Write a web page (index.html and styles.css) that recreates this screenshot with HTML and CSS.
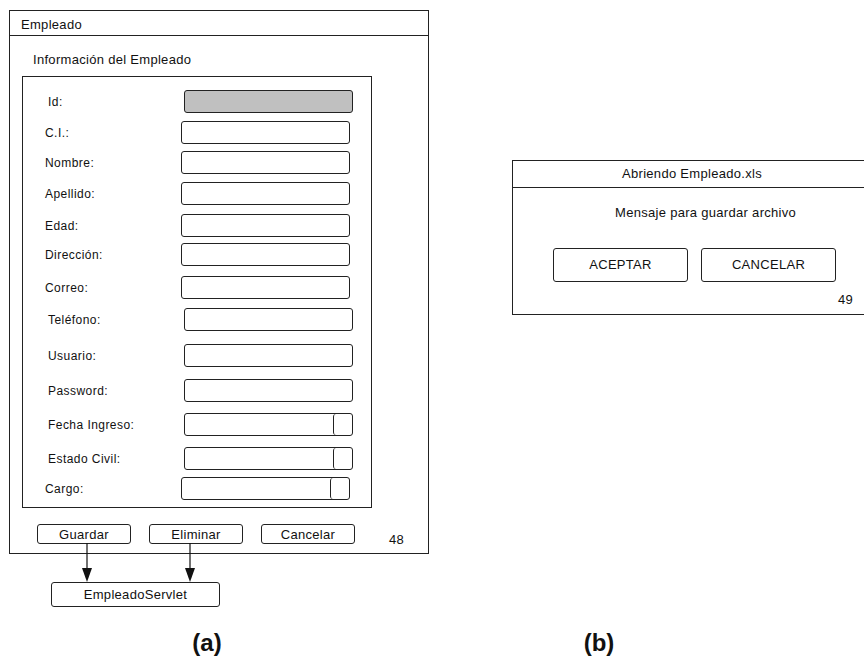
FILE: index.html
```html
<!DOCTYPE html>
<html lang="es">
<head>
    <meta charset="UTF-8">
    <meta name="viewport" content="width=device-width, initial-scale=1.0">
    <title>Empleado</title>
    <link rel="stylesheet" href="styles.css">
</head>
<body>
    <div class="canvas">

        <!-- (a) Ventana de empleado -->
        <section class="window window-a">
            <div class="title">Empleado</div>
            <h3 class="group-title">Información del Empleado</h3>
            <div class="group">
                <div class="row row-shift"><span class="label">Id:</span><span class="field field-off"></span></div>
                <div class="row"><span class="label">C.I.:</span><span class="field"></span></div>
                <div class="row"><span class="label">Nombre:</span><span class="field"></span></div>
                <div class="row"><span class="label">Apellido:</span><span class="field"></span></div>
                <div class="row"><span class="label">Edad:</span><span class="field"></span></div>
                <div class="row"><span class="label">Dirección:</span><span class="field"></span></div>
                <div class="row"><span class="label">Correo:</span><span class="field"></span></div>
                <div class="row row-shift"><span class="label">Teléfono:</span><span class="field"></span></div>
                <div class="row row-shift"><span class="label">Usuario:</span><span class="field"></span></div>
                <div class="row row-shift"><span class="label">Password:</span><span class="field"></span></div>
                <div class="row row-shift"><span class="label">Fecha Ingreso:</span><span class="field field-combo"><span class="combo-btn"></span></span></div>
                <div class="row row-shift"><span class="label">Estado Civil:</span><span class="field field-combo"><span class="combo-btn"></span></span></div>
                <div class="row"><span class="label">Cargo:</span><span class="field field-combo"><span class="combo-btn"></span></span></div>
            </div>
            <div class="actions">
                <span class="btn">Guardar</span>
                <span class="btn">Eliminar</span>
                <span class="btn">Cancelar</span>
                <span class="page-num">48</span>
            </div>
        </section>

        <svg class="arrows" width="120" height="40" viewBox="0 0 120 40">
            <line x1="10" y1="0" x2="10" y2="26" stroke="#111" stroke-width="1.2"/>
            <polygon points="5,25 15,25 10,39" fill="#111"/>
            <line x1="113" y1="0" x2="113" y2="26" stroke="#111" stroke-width="1.2"/>
            <polygon points="108,25 118,25 113,39" fill="#111"/>
        </svg>
        <div class="servlet">EmpleadoServlet</div>

        <!-- (b) Dialogo de archivo -->
        <section class="window window-b">
            <div class="title title-b">Abriendo Empleado.xls</div>
            <p class="message">Mensaje para guardar archivo</p>
            <div class="dialog-actions">
                <span class="btn btn-big">ACEPTAR</span>
                <span class="btn btn-big">CANCELAR</span>
            </div>
            <div class="page-num page-num-b">49</div>
        </section>

        <div class="caption caption-a">(a)</div>
        <div class="caption caption-b">(b)</div>
    </div>
</body>
</html>
```

FILE: styles.css
```css
body {
    margin: 0;
    background: #fff;
    color: #111;
    font-family: 'Liberation Sans', Arial, sans-serif;
    font-size: 13px;
    letter-spacing: 0.3px;
}
.canvas {
    position: relative;
    width: 864px;
    height: 658px;
    overflow: hidden;
}
.window {
    position: absolute;
    box-sizing: border-box;
    border: 1px solid #222;
    background: #fff;
}
.window-a {
    left: 9px;
    top: 10px;
    width: 420px;
    height: 544px;
}
.title {
    height: 24px;
    line-height: 27px;
    padding-left: 11px;
    border-bottom: 1px solid #222;
}
.group-title {
    margin: 16px 0 8px;
    padding-left: 23px;
    font-size: 13px;
    font-weight: normal;
    line-height: 16px;
}
.group {
    box-sizing: border-box;
    width: 350px;
    height: 432px;
    margin-left: 12px;
    padding-top: 13px;
    border: 1px solid #222;
}
.row {
    display: flex;
    align-items: center;
    height: 23px;
    padding-left: 22px;
}
.row-shift {
    padding-left: 25px;
}
.row:nth-child(2), .row:nth-child(4) { margin-top: 8px; }
.row:nth-child(3) { margin-top: 7px; }
.row:nth-child(5) { margin-top: 9px; }
.row:nth-child(6) { margin-top: 6px; }
.row:nth-child(7) { margin-top: 10px; }
.row:nth-child(8) { margin-top: 9px; }
.row:nth-child(9) { margin-top: 13px; }
.row:nth-child(10) { margin-top: 12px; }
.row:nth-child(11), .row:nth-child(12) { margin-top: 11px; }
.row:nth-child(13) { margin-top: 7px; }
.label {
    width: 136px;
    font-size: 12px;
    letter-spacing: 0.45px;
}
.field {
    display: flex;
    justify-content: flex-end;
    box-sizing: border-box;
    width: 169px;
    height: 23px;
    border: 1px solid #222;
    border-radius: 3px;
}
.field-off {
    background: #c0c0c0;
}
.combo-btn {
    box-sizing: border-box;
    width: 19px;
    height: 100%;
    border-left: 1px solid #222;
    border-radius: 3px;
}
.actions {
    display: flex;
    align-items: flex-start;
    margin-top: 16px;
    padding-left: 27px;
    gap: 18px;
}
.btn {
    box-sizing: border-box;
    width: 94px;
    height: 20px;
    border: 1px solid #222;
    border-radius: 3px;
    text-align: center;
    line-height: 19px;
}
.page-num {
    margin: 9px 0 0 16px;
    line-height: 14px;
}
.arrows {
    position: absolute;
    left: 77px;
    top: 543px;
}
.servlet {
    position: absolute;
    left: 51px;
    top: 582px;
    box-sizing: border-box;
    width: 169px;
    height: 25px;
    border: 1px solid #222;
    border-radius: 3px;
    text-align: center;
    line-height: 23px;
}
.window-b {
    left: 512px;
    top: 160px;
    width: 364px;
    height: 155px;
}
.title-b {
    height: 26px;
    line-height: 26px;
    padding-left: 109px;
}
.message {
    margin: 17px 0 0;
    padding-left: 102px;
    line-height: 16px;
}
.dialog-actions {
    display: flex;
    gap: 13px;
    margin-top: 27px;
    padding-left: 40px;
}
.btn-big {
    width: 135px;
    height: 34px;
    line-height: 32px;
}
.page-num-b {
    margin: 11px 0 0;
    padding-left: 325px;
}
.caption {
    position: absolute;
    top: 628px;
    width: 60px;
    font-size: 24px;
    font-weight: bold;
    letter-spacing: 0;
    text-align: center;
    line-height: 30px;
}
.caption-a { left: 177px; }
.caption-b { left: 569px; }
```
